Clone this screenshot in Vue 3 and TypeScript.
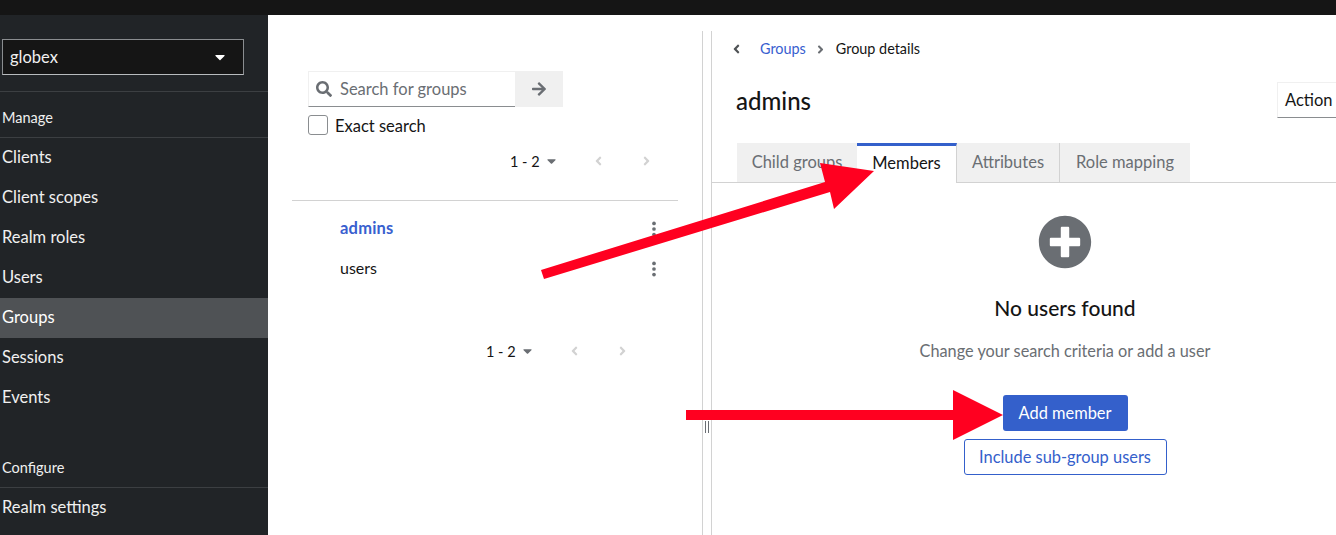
<script setup lang="ts">
const manageItems = ['Clients', 'Client scopes', 'Realm roles', 'Users', 'Groups', 'Sessions', 'Events'];
const tabs = ['Child groups', 'Members', 'Attributes', 'Role mapping'];
const caret = 'M31.3 192h257.3c17.8 0 26.7 21.5 14.1 34.1L174.1 354.8c-7.8 7.8-20.5 7.8-28.3 0L17.2 226.1C4.6 213.5 13.5 192 31.3 192z';
const angleLeft = 'M31.7 239l136-136c9.4-9.4 24.6-9.4 33.9 0l22.6 22.6c9.4 9.4 9.4 24.6 0 33.9L127.9 256l96.4 96.4c9.4 9.4 9.4 24.6 0 33.9L201.7 409c-9.4 9.4-24.6 9.4-33.9 0l-136-136c-9.5-9.4-9.5-24.6-.1-34z';
const angleRight = 'M224.3 273l-136 136c-9.4 9.4-24.6 9.4-33.9 0l-22.6-22.6c-9.4-9.4-9.4-24.6 0-33.9l96.4-96.4-96.4-96.4c-9.4-9.4-9.4-24.6 0-33.9L54.3 103c9.4-9.4 24.6-9.4 33.9 0l136 136c9.5 9.4 9.5 24.6.1 34z';
const groups = [
  { name: 'admins', active: true },
  { name: 'users', active: false },
];
</script>

<template>
  <div class="page">
    <div class="topbar" />
    <div class="body">
      <aside class="sidebar">
        <div class="realm">
          <span>globex</span>
          <svg class="realm-caret" viewBox="0 0 320 512"><path :d="caret" /></svg>
        </div>
        <div class="nav-title nav-title-first">Manage</div>
        <div v-for="item in manageItems" :key="item" class="nav-item" :class="{ current: item === 'Groups' }">{{ item }}</div>
        <div class="nav-title nav-title-second">Configure</div>
        <div class="nav-item">Realm settings</div>
      </aside>

      <section class="tree">
        <div class="search-row">
          <div class="search-box">
            <svg class="search-icon" viewBox="0 0 512 512"><path d="M505 442.7L405.3 343c-4.5-4.5-10.6-7-17-7H372c27.6-35.3 44-79.7 44-128C416 93.1 322.9 0 208 0S0 93.1 0 208s93.1 208 208 208c48.3 0 92.7-16.4 128-44v16.3c0 6.4 2.5 12.5 7 17l99.7 99.7c9.4 9.4 24.6 9.4 33.9 0l28.3-28.3c9.4-9.4 9.4-24.6.1-34zM208 336c-70.7 0-128-57.2-128-128 0-70.7 57.2-128 128-128 70.7 0 128 57.2 128 128 0 70.7-57.2 128-128 128z" /></svg>
            <span>Search for groups</span>
          </div>
          <div class="search-btn">
            <svg viewBox="0 0 448 512"><path d="M190.5 66.9l22.2-22.2c9.4-9.4 24.6-9.4 33.9 0L441 239c9.4 9.4 9.4 24.6 0 33.9L246.6 467.3c-9.4 9.4-24.6 9.4-33.9 0l-22.2-22.2c-9.5-9.5-9.3-25 .4-34.3L311.4 296H24c-13.3 0-24-10.7-24-24v-32c0-13.3 10.7-24 24-24h287.4L190.9 101.2c-9.8-9.3-10-24.8-.4-34.3z" /></svg>
          </div>
        </div>
        <label class="exact">
          <span class="checkbox" />
          <span class="exact-label">Exact search</span>
        </label>
        <div class="pager pager-top">
          <span class="pager-count">1 - 2</span>
          <svg class="pager-caret" viewBox="0 0 320 512"><path :d="caret" /></svg>
          <svg class="pager-arrow" viewBox="0 0 256 512"><path :d="angleLeft" /></svg>
          <svg class="pager-arrow" viewBox="0 0 256 512"><path :d="angleRight" /></svg>
        </div>
        <ul class="group-list">
          <li v-for="g in groups" :key="g.name" class="group-row">
            <span class="group-name" :class="{ 'group-active': g.active }">{{ g.name }}</span>
            <svg class="kebab" viewBox="0 0 6 20"><circle cx="3" cy="3" r="2.3" /><circle cx="3" cy="10" r="2.3" /><circle cx="3" cy="17" r="2.3" /></svg>
          </li>
        </ul>
        <div class="pager pager-bottom">
          <span class="pager-count">1 - 2</span>
          <svg class="pager-caret" viewBox="0 0 320 512"><path :d="caret" /></svg>
          <svg class="pager-arrow" viewBox="0 0 256 512"><path :d="angleLeft" /></svg>
          <svg class="pager-arrow" viewBox="0 0 256 512"><path :d="angleRight" /></svg>
        </div>
      </section>

      <div class="splitter">
        <span class="grip" />
      </div>

      <section class="detail">
        <nav class="breadcrumb">
          <svg class="crumb-back" viewBox="0 0 256 512"><path :d="angleLeft" /></svg>
          <a class="crumb-link">Groups</a>
          <svg class="crumb-sep" viewBox="0 0 256 512"><path :d="angleRight" /></svg>
          <span>Group details</span>
        </nav>
        <div class="title-row">
          <h1>admins</h1>
          <div class="action">Action</div>
        </div>
        <div class="tabs">
          <div v-for="t in tabs" :key="t" class="tab" :class="{ selected: t === 'Members' }">{{ t }}</div>
        </div>
        <div class="empty">
          <svg class="empty-icon" viewBox="0 0 512 512"><path d="M256 8C119 8 8 119 8 256s111 248 248 248 248-111 248-248S393 8 256 8zm144 276c0 6.6-5.4 12-12 12h-92v92c0 6.6-5.4 12-12 12h-56c-6.6 0-12-5.4-12-12v-92h-92c-6.6 0-12-5.4-12-12v-56c0-6.6 5.4-12 12-12h92v-92c0-6.6 5.4-12 12-12h56c6.6 0 12 5.4 12 12v92h92c6.6 0 12 5.4 12 12v56z" /></svg>
          <h2>No users found</h2>
          <p>Change your search criteria or add a user</p>
          <button class="btn-primary">Add member</button>
          <button class="btn-secondary">Include sub-group users</button>
        </div>
      </section>
    </div>

    <!-- Red annotation arrows drawn over the screenshot -->
    <svg class="annotations" viewBox="0 0 1336 535">
      <polygon points="541,270 544,279 830,192 834,209 874,171 820,163 825,182" fill="#ff0020" />
      <polygon points="686,410 953,410 953,390 1003,415 953,440 953,420 686,420" fill="#ff0020" />
    </svg>
  </div>
</template>

<style>
html,
body {
  margin: 0;
  background: #fff;
  overflow: hidden;
}
</style>

<style scoped>
.page {
  position: relative;
  width: 1336px;
  height: 535px;
  overflow: hidden;
  font-family: Lato, "Noto Sans", sans-serif;
  font-size: 16.5px;
  color: #151515;
}

.topbar {
  height: 15px;
  background: #151515;
}

.body {
  display: flex;
  height: 520px;
}

.sidebar {
  width: 268px;
  flex: none;
  background: #212427;
  color: #f0f0f0;
  padding-top: 24px;
  box-sizing: border-box;
}

.realm {
  display: flex;
  align-items: center;
  justify-content: space-between;
  box-sizing: border-box;
  width: 242px;
  height: 36px;
  margin-left: 2px;
  padding: 0 18px 0 7px;
  background: #151515;
  border: 1px solid #8a8d90;
  border-bottom-color: #b8bbbe;
  color: #f0f0f0;
}

.realm-caret {
  width: 10px;
  height: 16px;
  fill: #fff;
}

.nav-title {
  box-sizing: border-box;
  padding-left: 2px;
  font-size: 14.5px;
  color: #f0f0f0;
  border-bottom: 1px solid #3c3f42;
}

.nav-title-first {
  height: 47px;
  margin-top: 16px;
  padding-top: 17px;
  border-top: 1px solid #3c3f42;
}

.nav-title-second {
  height: 70px;
  padding-top: 41px;
}

.nav-item {
  height: 40px;
  line-height: 39px;
  padding-left: 2px;
}

.nav-item.current {
  background: #4f5255;
  color: #fff;
}

.tree {
  width: 434px;
  flex: none;
  box-sizing: border-box;
  padding: 56px 24px 0;
}

.search-row {
  display: flex;
  margin-left: 16px;
  height: 36px;
}

.search-box {
  display: flex;
  align-items: center;
  gap: 8px;
  box-sizing: border-box;
  width: 207px;
  padding-left: 7px;
  border: 1px solid #f0f0f0;
  border-bottom-color: #8a8d90;
  border-right: none;
  color: #6a6e73;
}

.search-icon {
  width: 16px;
  height: 16px;
  fill: #6a6e73;
}

.search-btn {
  display: flex;
  align-items: center;
  justify-content: center;
  width: 48px;
  background: #f0f0f0;
}

.search-btn svg {
  width: 14px;
  height: 16px;
  fill: #6a6e73;
}

.exact {
  display: flex;
  align-items: center;
  gap: 7px;
  margin: 8px 0 0 16px;
  height: 20px;
}

.exact-label {
  padding-top: 2px;
}

.checkbox {
  box-sizing: border-box;
  width: 20px;
  height: 20px;
  border: 1px solid #8a8d90;
  border-radius: 3px;
}

.pager {
  display: flex;
  align-items: center;
  height: 20px;
  font-size: 14.5px;
}

.pager-top {
  margin: 16px 0 0 218px;
}

.pager-bottom {
  margin: 52px 0 0 194px;
}

.pager-count {
  width: 36px;
}

.pager-caret {
  width: 9px;
  height: 14px;
  margin: 0 0 0 1px;
  fill: #6a6e73;
}

.pager-arrow {
  width: 7px;
  height: 14px;
  margin-left: 41px;
  fill: #d2d2d2;
}

.pager-caret + .pager-arrow {
  margin-left: 39px;
}

.group-list {
  list-style: none;
  margin: 29px 0 0;
  padding: 8px 0 0;
  width: 386px;
  border-top: 1px solid #d2d2d2;
}

.group-row {
  display: flex;
  align-items: center;
  justify-content: space-between;
  box-sizing: border-box;
  height: 40px;
  padding: 0 21px 0 48px;
  font-size: 16px;
}

.group-name {
  padding-bottom: 3px;
}

.group-active {
  color: #3860cf;
  font-weight: 700;
  font-size: 16.5px;
  letter-spacing: 0.2px;
}

.kebab {
  width: 6px;
  height: 16px;
  fill: #6a6e73;
}

.splitter {
  position: relative;
  box-sizing: border-box;
  width: 10px;
  flex: none;
  margin-top: 16px;
  border-left: 1px solid #d2d2d2;
  border-right: 1px solid #d2d2d2;
}

.grip {
  position: absolute;
  left: 2px;
  top: 390px;
  width: 2px;
  height: 12px;
  border-left: 1px solid #6a6e73;
  border-right: 1px solid #6a6e73;
}

.detail {
  flex: 1;
  min-width: 0;
}

.breadcrumb {
  display: flex;
  align-items: center;
  height: 20px;
  margin: 24px 0 0 21px;
  font-size: 14.4px;
  line-height: 18px;
}

.crumb-back {
  width: 7px;
  height: 14px;
  fill: #4f5255;
}

.crumb-link {
  margin-left: 20px;
  color: #3860cf;
}

.crumb-sep {
  width: 7px;
  height: 13px;
  margin: 0 12px 0 11px;
  fill: #6a6e73;
}

.title-row {
  display: flex;
  align-items: center;
  justify-content: space-between;
  height: 36px;
  margin-top: 23px;
  padding-left: 24px;
}

h1 {
  margin: 0;
  font-size: 24px;
  font-weight: 500;
}

.action {
  box-sizing: border-box;
  width: 59px;
  height: 36px;
  padding-left: 7px;
  line-height: 34px;
  border: 1px solid #f0f0f0;
  border-bottom-color: #8a8d90;
  border-right: none;
}

.tabs {
  display: flex;
  height: 40px;
  margin-top: 25px;
  padding-left: 25px;
  border-bottom: 1px solid #d2d2d2;
  box-sizing: border-box;
}

.tab {
  box-sizing: border-box;
  height: 39px;
  line-height: 39px;
  background: #f0f0f0;
  color: #6a6e73;
  border-right: 1px solid #d2d2d2;
  text-align: center;
  white-space: nowrap;
}

.tab:nth-child(1) {
  width: 120px;
  border-right: none;
}

.tab:nth-child(2) {
  width: 100px;
}

.tab:nth-child(3) {
  width: 103px;
}

.tab:nth-child(4) {
  width: 130px;
  border-right: none;
}

.tab.selected {
  height: 40px;
  background: #fff;
  color: #151515;
  border-top: 3px solid #3460cb;
  line-height: 35px;
}

.empty {
  display: flex;
  flex-direction: column;
  align-items: center;
  padding: 32px 0 0 82px;
}

.empty-icon {
  width: 54px;
  height: 54px;
  fill: #6a6e73;
}

h2 {
  margin: 25px 0 0;
  height: 28px;
  line-height: 28px;
  font-size: 21px;
  font-weight: 500;
  color: #151515;
}

p {
  margin: 17px 0 0;
  height: 24px;
  line-height: 24px;
  font-size: 16.3px;
  color: #6a6e73;
}

button {
  font-family: inherit;
  font-size: 16.4px;
  border-radius: 3px;
  box-sizing: border-box;
  padding-bottom: 3px;
  cursor: pointer;
}

.btn-primary {
  width: 125px;
  height: 36px;
  margin-top: 32px;
  background: #3460cb;
  color: #fff;
  border: none;
}

.btn-secondary {
  width: 203px;
  height: 36px;
  margin-top: 8px;
  background: #fff;
  color: #3460cb;
  border: 1px solid #3460cb;
}

.annotations {
  position: absolute;
  left: 0;
  top: 0;
  width: 1336px;
  height: 535px;
  pointer-events: none;
}
</style>
